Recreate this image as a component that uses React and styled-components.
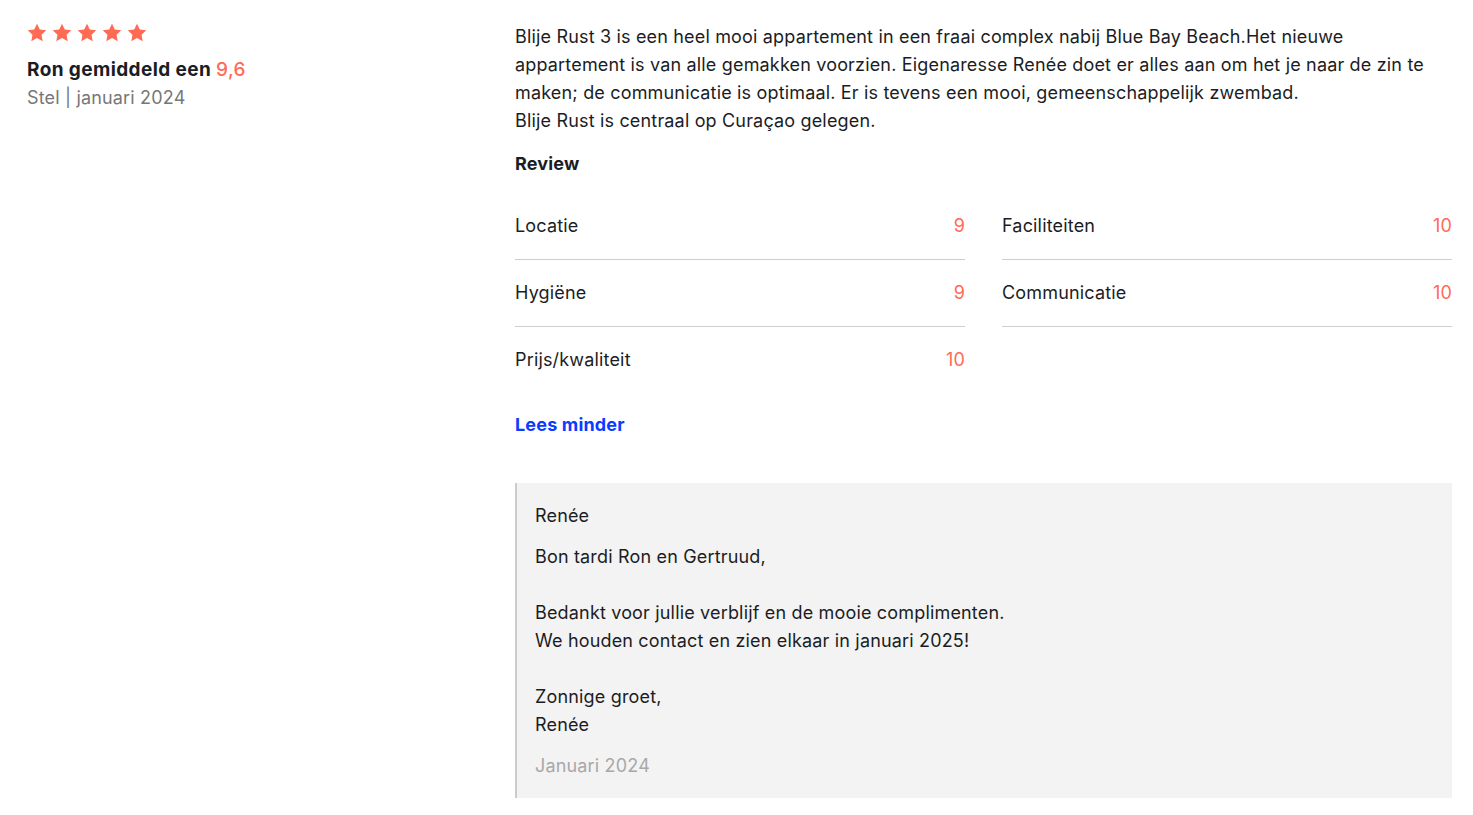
import React from 'react';
import styled, { createGlobalStyle } from 'styled-components';

const GlobalStyle = createGlobalStyle`
  body {
    margin: 0;
    background: #ffffff;
    font-family: Inter, "Noto Sans", "Liberation Sans", sans-serif;
    letter-spacing: 0.17px;
    color: #1b1d24;
  }
`;

const Page = styled.div`
  display: grid;
  grid-template-columns: 488px 1fr;
  padding: 23px 21px 16px 27px;
`;

const Author = styled.div`
  display: flex;
  flex-direction: column;
`;

const Stars = styled.div`
  display: flex;
  gap: 5px;
  margin-bottom: 14px;
`;

const Name = styled.div`
  font-size: 19px;
  font-weight: 700;
  line-height: 28px;
  letter-spacing: 0.4px;
`;

const Score = styled.span`
  color: #ff6a55;
  font-weight: 500;
`;

const Meta = styled.div`
  font-size: 18px;
  line-height: 28px;
  color: #777777;
`;

const Content = styled.div`
  display: flex;
  flex-direction: column;
`;

const Text = styled.p`
  margin: 0;
  font-size: 18px;
  line-height: 28px;
`;

const Heading = styled.h3`
  margin: 15px 0 15px;
  font-size: 18px;
  font-weight: 700;
  line-height: 28px;
`;

const Ratings = styled.div`
  display: grid;
  grid-template-columns: 1fr 1fr;
  column-gap: 37px;
`;

const Rating = styled.div`
  display: flex;
  justify-content: space-between;
  align-items: center;
  padding: 19px 0;
  font-size: 18px;
  line-height: 28px;
  border-bottom: 1px solid #cfcfcf;
  &:last-child {
    border-bottom: none;
  }
`;

const Value = styled.span`
  color: #ff6a55;
`;

const More = styled.a`
  margin-top: 18px;
  font-size: 18px;
  font-weight: 700;
  line-height: 28px;
  color: #0a3bff;
  text-decoration: none;
  cursor: pointer;
  align-self: flex-start;
`;

const Reply = styled.div`
  margin-top: 44px;
  background: #f3f3f3;
  border-left: 2px solid #cccccc;
  padding: 19px 20px 18px 18px;
  display: flex;
  flex-direction: column;
  gap: 13px;
`;

const ReplyDate = styled(Text)`
  color: #a8a8a8;
`;

const Star = () => (
  <svg width="20" height="19" viewBox="0 0 24 23">
    <path
      d="M12 0.8l3.4 7.1 7.8 1-5.7 5.4 1.4 7.7L12 18.3 5.1 22l1.4-7.7L0.8 8.9l7.8-1z"
      fill="#ff6a55"
    />
  </svg>
);

const ratings = [
  ['Locatie', 9],
  ['Faciliteiten', 10],
  ['Hygiëne', 9],
  ['Communicatie', 10],
  ['Prijs/kwaliteit', 10],
];

export default function App() {
  return (
    <>
      <GlobalStyle />
      <Page>
        <Author>
          <Stars>
            {[0, 1, 2, 3, 4].map((i) => (
              <Star key={i} />
            ))}
          </Stars>
          <Name>
            Ron gemiddeld een <Score>9,6</Score>
          </Name>
          <Meta>Stel | januari 2024</Meta>
        </Author>

        <Content>
          <Text>
            Blije Rust 3 is een heel mooi appartement in een fraai complex nabij Blue Bay Beach.Het nieuwe
            appartement is van alle gemakken voorzien. Eigenaresse Renée doet er alles aan om het je naar de zin te
            maken; de communicatie is optimaal. Er is tevens een mooi, gemeenschappelijk zwembad.
            <br />
            Blije Rust is centraal op Curaçao gelegen.
          </Text>
          <Heading>Review</Heading>
          <Ratings>
            {ratings.map(([label, value]) => (
              <Rating key={label}>
                <span>{label}</span>
                <Value>{value}</Value>
              </Rating>
            ))}
          </Ratings>
          <More>Lees minder</More>

          <Reply>
            <Text>Renée</Text>
            <Text>
              Bon tardi Ron en Gertruud,
              <br />
              <br />
              Bedankt voor jullie verblijf en de mooie complimenten.
              <br />
              We houden contact en zien elkaar in januari 2025!
              <br />
              <br />
              Zonnige groet,
              <br />
              Renée
            </Text>
            <ReplyDate>Januari 2024</ReplyDate>
          </Reply>
        </Content>
      </Page>
    </>
  );
}
